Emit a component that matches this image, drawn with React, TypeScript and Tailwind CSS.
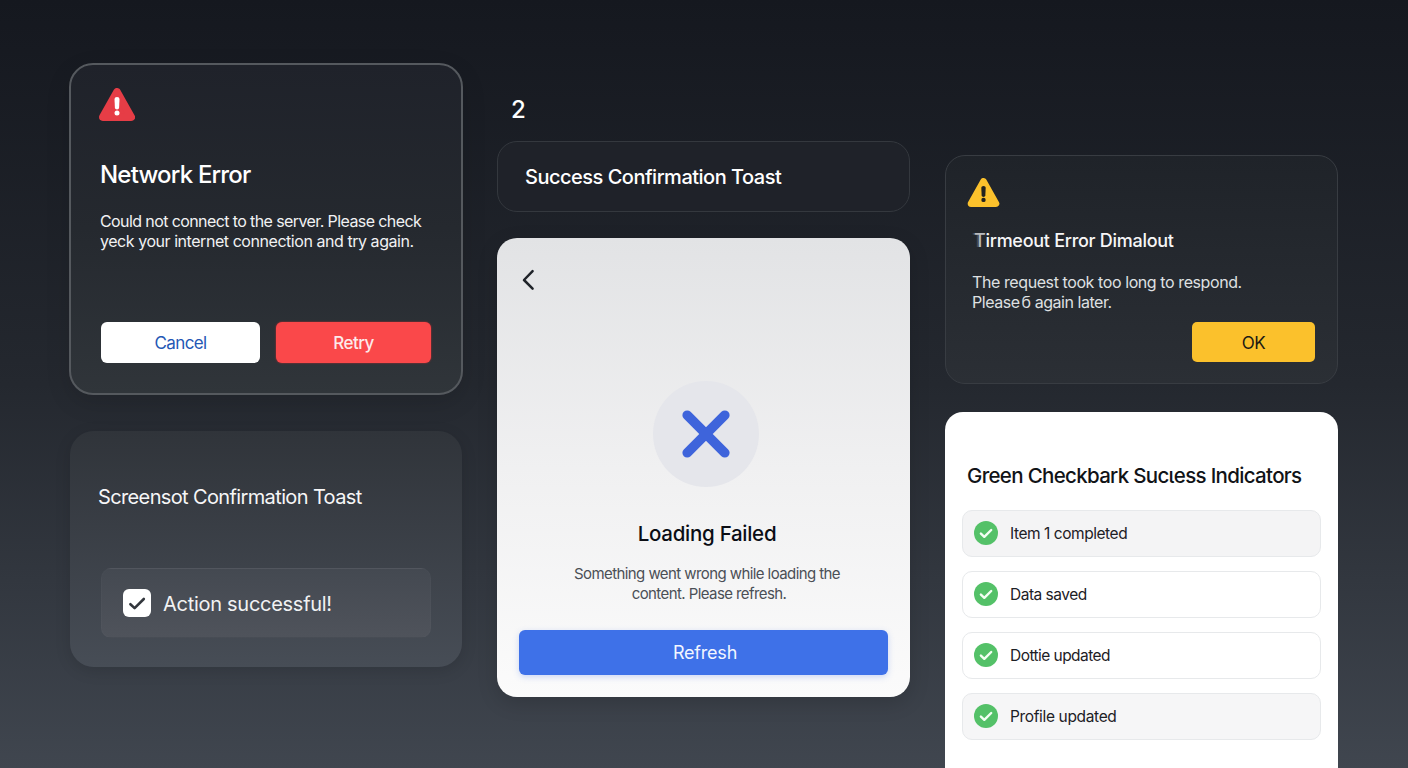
import React from "react";

type WarningProps = { className: string; fill: string; mark: string };

function WarningTriangle({ className, fill, mark }: WarningProps) {
  return (
    <svg viewBox="0 0 36 33" className={className} aria-hidden="true">
      <path d="M18 3.9 L32.2 29.1 H3.8 Z" fill={fill} stroke={fill} strokeWidth="7.6" strokeLinejoin="round" />
      <path d="M15.5 11 Q15.5 9 18 9 Q20.5 9 20.5 11 L20.1 19.8 Q20 21.5 18 21.5 Q16 21.5 15.9 19.8 Z" fill={mark} />
      <circle cx="18" cy="24.9" r="2.5" fill={mark} />
    </svg>
  );
}

function NetworkErrorCard() {
  return (
    <section className="h-[332px] rounded-[24px] border-2 border-[#55595e] bg-linear-to-b from-[#1f222a] via-[#25292f] to-[#30353a] px-[30px] pt-[23px] shadow-[0_8px_24px_rgba(0,0,0,0.12)]">
      <WarningTriangle className="-ml-0.5 h-[33px] w-9" fill="#e63d46" mark="#ffffff" />
      <h2 className="mt-[38px] -ml-px h-8 whitespace-nowrap text-[24px] leading-8 font-medium tracking-[-0.8px] text-white">Network Error</h2>
      <div className="mt-5 -ml-px whitespace-nowrap text-[16px] leading-5 text-[#f1f2f3]">
        <p className="tracking-[-0.6px]">Could not connect to the server. Please check</p>
        <p className="tracking-[-0.45px]">yeck your internet connection and try again.</p>
      </div>
      <div className="mt-[71px] flex gap-4">
        <button className="h-[41px] w-[159px] rounded-md bg-white pt-[3px] text-[17px] tracking-[-0.6px] text-[#2457b5]">Cancel</button>
        <button className="h-[41px] w-[155px] rounded-md bg-[#fa484a] pt-[3px] text-[17px] font-medium tracking-[-0.5px] text-[#fdeaea] shadow-[0_0_2px_#c92b30]">Retry</button>
      </div>
    </section>
  );
}

function ScreenshotToastCard() {
  return (
    <section className="mt-[36px] ml-px h-[236px] w-[392px] rounded-[24px] bg-linear-to-b from-[#30343a] to-[#474d56] px-[31px] pt-[52px] shadow-[0_4px_16px_rgba(0,0,0,0.12)]">
      <h2 className="-ml-[3px] h-7 whitespace-nowrap text-[20px] leading-7 tracking-[-0.63px] text-[#f6f6f7]">Screensot Confirmation Toast</h2>
      <div className="mt-[57px] flex h-[70px] w-[330px] items-center gap-3 rounded-[10px] border border-white/2 bg-linear-to-b from-[#444951] to-[#4f535b] pl-[21px]">
        <span className="flex size-7 items-center justify-center rounded-md bg-white">
          <svg viewBox="0 0 28 28" className="size-7" fill="none" stroke="#33373d" strokeWidth="2.6" strokeLinecap="round" strokeLinejoin="round">
            <path d="M7.4 15.2 L11.6 19.1 L20.8 10" />
          </svg>
        </span>
        <span className="pt-0.5 whitespace-nowrap text-[20px] tracking-[-0.28px] text-[#f1f2f3]">Action successful!</span>
      </div>
    </section>
  );
}

function LoadingFailedCard() {
  return (
    <section className="mt-[26px] flex h-[459px] flex-col rounded-[20px] bg-linear-to-b from-[#e2e3e5] via-[#f0f0f1] to-[#fbfbfb] px-[22px] shadow-[0_6px_20px_rgba(0,0,0,0.15)]">
      <svg viewBox="0 0 14 22" className="mt-[31px] ml-[2px] h-[22px] w-3.5" fill="none" stroke="#1f2329" strokeWidth="2.5" strokeLinecap="round" strokeLinejoin="round">
        <path d="M11.6 2.2 L3 11 L11.6 19.6" />
      </svg>
      <div className="mt-[90px] ml-[5px] flex size-[106px] items-center justify-center self-center rounded-full bg-[#e5e6eb]">
        <svg viewBox="0 0 48 48" className="size-12" fill="none" stroke="#3e64db" strokeWidth="9.6" strokeLinecap="round">
          <path d="M5.2 5.2 L42.8 42.8 M42.8 5.2 L5.2 42.8" />
        </svg>
      </div>
      <h2 className="mt-[33px] ml-[7px] whitespace-nowrap text-center text-[20.5px] leading-7 font-medium tracking-[-0.28px] text-[#0b0d14]">Loading Failed</h2>
      <div className="mt-4 ml-[7px] whitespace-nowrap text-center text-[15px] leading-5 tracking-[-0.58px] text-[#4b4f56]">
        <p>Something went wrong while loading the</p>
        <p className="ml-1">content. Please refresh.</p>
      </div>
      <button className="mt-[26px] h-[45px] w-full rounded-md bg-[#3e71e8] pl-[3px] text-[18px] tracking-[-0.2px] text-[#f2f6ff] shadow-[0_2px_6px_rgba(62,113,232,0.25)]">
        Refresh
      </button>
    </section>
  );
}

function TimeoutCard() {
  return (
    <section className="flex h-[229px] flex-col rounded-[20px] border border-[#383c42] bg-linear-to-b from-[#1f2329] to-[#2b2f35] px-[22px] pt-[22px]">
      <WarningTriangle className="-ml-px h-[29px] w-[33px]" fill="#fbc12c" mark="#22221f" />
      <h2 className="mt-5 ml-[6px] h-7 whitespace-nowrap text-[18px] leading-7 font-medium tracking-[-0.28px] text-[#f6f6f7]">
        <span className="text-[#b8babd] [text-shadow:-2px_0_0_rgba(160,163,168,0.3)]">T</span>irmeout Error Dimalout
      </h2>
      <div className="mt-[18px] ml-[4px] whitespace-nowrap text-[16px] leading-[19.5px] text-[#dfe0e2]">
        <p className="tracking-[-0.41px]">The request took too long to respond.</p>
        <p className="tracking-[-0.46px]">Please<span className="ml-0.5">б</span> again later.</p>
      </div>
      <button className="mt-[10px] h-10 w-[123px] self-end rounded-[5px] bg-[#fbc12c] pt-[3px] text-[17px] tracking-[-0.4px] text-[#1c1a14]">OK</button>
    </section>
  );
}

const items = [
  { label: "Item 1 completed", className: "bg-[#f4f4f5] tracking-[-0.45px]" },
  { label: "Data saved", className: "bg-white tracking-[-0.5px]" },
  { label: "Dottie updated", className: "bg-white tracking-[-0.55px]" },
  { label: "Profile updated", className: "bg-[#f6f6f7] tracking-[-0.35px]" },
];

function IndicatorsCard() {
  return (
    <section className="mt-[28px] h-[376px] rounded-t-[18px] bg-white px-[17px] pt-[50px]">
      <h2 className="ml-[5px] h-7 whitespace-nowrap text-[20.5px] leading-7 font-medium tracking-[-0.68px] text-[#111317]">Green Checkbark Sucιess Indicators</h2>
      <ul className="mt-[20px] flex w-[359px] flex-col gap-3.5">
        {items.map((item) => (
          <li
            key={item.label}
            className={`flex h-[47px] items-center gap-3 rounded-[10px] border border-[#e7e9eb] pl-[11px] text-[15.5px] text-[#1d2025] ${item.className}`}
          >
            <svg viewBox="0 0 24 24" className="mb-px size-6" fill="none">
              <circle cx="12" cy="12" r="12" fill="#54c168" />
              <path d="M6.9 12.6 L10.3 15.8 L17.2 9" stroke="#f3fff3" strokeWidth="2.4" strokeLinecap="round" strokeLinejoin="round" />
            </svg>
            <span className="whitespace-nowrap">{item.label}</span>
          </li>
        ))}
      </ul>
    </section>
  );
}

export default function App() {
  return (
    <main className="flex h-[768px] w-[1408px] items-start gap-[34px] overflow-hidden bg-linear-to-b from-[#15181f] via-[#24282f] to-[#40464f] pl-[69px] font-[Inter,'Liberation_Sans',sans-serif]">
      <div className="w-[394px] pt-[63px]">
        <NetworkErrorCard />
        <ScreenshotToastCard />
      </div>
      <div className="w-[413px] pt-[94px]">
        <p className="ml-3.5 h-8 text-[24px] leading-8 font-medium text-white">2</p>
        <section className="mt-[15px] flex h-[71px] items-center rounded-[20px] border border-[#34383e] bg-[#1f2229] pl-[27px]">
          <h2 className="whitespace-nowrap text-[20px] font-medium tracking-[-0.5px] text-white">Success Confirmation Toast</h2>
        </section>
        <LoadingFailedCard />
      </div>
      <div className="ml-px w-[393px] pt-[155px]">
        <TimeoutCard />
        <IndicatorsCard />
      </div>
    </main>
  );
}
